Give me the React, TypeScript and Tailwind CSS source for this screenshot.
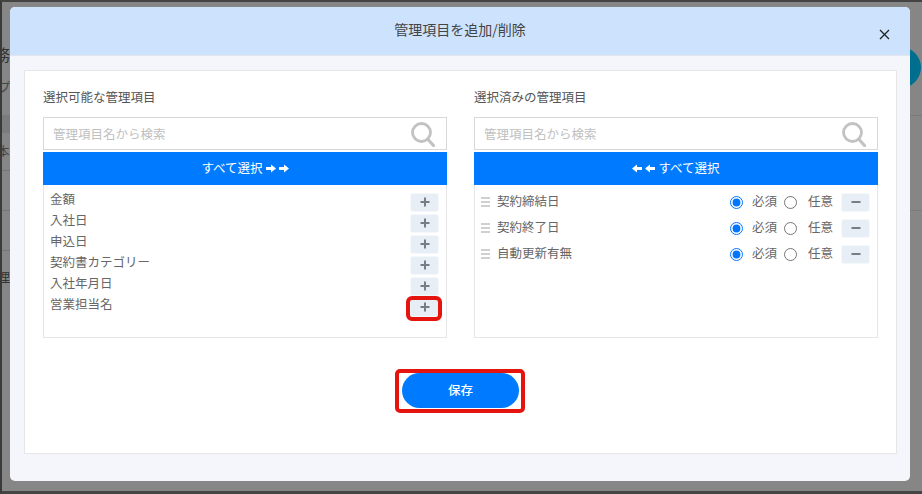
import { ReactNode } from 'react';

const FONT = "font-['Noto_Sans_CJK_JP','Noto_Sans',sans-serif]";

const available = ['金額', '入社日', '申込日', '契約書カテゴリー', '入社年月日', '営業担当名'];
const selected = ['契約締結日', '契約終了日', '自動更新有無'];

const SearchIcon = () => (
  <svg width="24" height="25" viewBox="0 0 24 25" fill="none" stroke="#c2c2c2" className="absolute right-[11px] top-[4px]">
    <circle cx="10.5" cy="10.5" r="9" strokeWidth="2.8" />
    <path d="M17 17.5 L22.5 23.5" strokeWidth="3.2" strokeLinecap="round" />
  </svg>
);

const Arrow = ({ left }: { left?: boolean }) => (
  <svg width="10" height="9" viewBox="0 0 10 9" fill="white" className={left ? 'rotate-180' : ''}>
    <path d="M0 3h5V0.5L10 4.5 5 8.5V6H0z" />
  </svg>
);

const SearchBox = () => (
  <div className="relative h-[33px] border border-[#d8d8d8] bg-white pl-[9px] pt-[1px] flex items-center">
    <span className="text-[12.5px] text-[#c0c0c0]">管理項目名から検索</span>
    <SearchIcon />
  </div>
);

const Column = ({ label, action, children }: { label: string; action: ReactNode; children: ReactNode }) => (
  <div className="w-[404px] flex flex-col">
    <div className="h-[46px] pt-[16px] text-[12.5px] leading-[20px] text-[#555]">{label}</div>
    <SearchBox />
    <div className="mt-[2px] h-[33px] bg-[#007bff] text-white text-[12.5px] flex items-center justify-center gap-[3px]">
      {action}
    </div>
    <div className="h-[153px] border border-t-0 border-[#e6e6e6] bg-white">{children}</div>
  </div>
);

const SquareButton = ({ minus }: { minus?: boolean }) => (
  <button className="w-[27px] h-[17px] rounded-[2px] bg-[#e8eef6] shadow-[0_0_0_1px_#f5f8fb] flex items-center justify-center">
    <svg width="10" height="10" viewBox="0 0 10 10" fill="#777c85">
      <rect x="0.5" y="4" width="9" height="2" />
      {!minus && <rect x="4" y="0.5" width="2" height="9" />}
    </svg>
  </button>
);

const Handle = () => (
  <div className="w-[9px] flex flex-col gap-[2px] mr-[7px]">
    <div className="h-[2px] bg-[#d0d0d0]" />
    <div className="h-[2px] bg-[#d0d0d0]" />
    <div className="h-[2px] bg-[#d0d0d0]" />
  </div>
);

export default function App() {
  return (
    <div className={`relative w-[922px] h-[494px] overflow-hidden bg-[#868686] ${FONT}`}>
      {/* page behind the overlay */}
      <div className="absolute left-[2px] top-[115px] w-[8px] h-[18px] bg-[#7c7c7c]" />
      <div className="absolute left-[2px] top-[170px] w-[8px] h-[1px] bg-[#777]" />
      <div className="absolute left-[2px] top-[210px] w-[8px] h-[1px] bg-[#777]" />
      <div className="absolute left-[2px] top-[250px] w-[8px] h-[1px] bg-[#777]" />
      <div className="absolute left-[910px] top-[115px] w-[12px] h-[1px] bg-[#7a7a7a]" />
      <div className="absolute left-[910px] top-[210px] w-[12px] h-[1px] bg-[#7a7a7a]" />
      <div className="absolute left-[-6px] top-[43px] text-[16px] leading-[22px] text-[#333]">務</div>
      <div className="absolute left-[-2px] top-[78px] text-[12.5px] leading-[18px] text-[#444]">プ</div>
      <div className="absolute left-[-3px] top-[142px] text-[12.5px] leading-[18px] text-[#444]">本</div>
      <div className="absolute left-[-3px] top-[268px] text-[13px] leading-[18px] text-[#333]">理</div>
      <div className="absolute left-[880px] top-[47px] w-[41px] h-[41px] rounded-full bg-[#006e8f]" />
      <div className="absolute inset-0 border-2 border-b-[3px] border-r-0 border-[#444] border-l-[#3a3a3a]" />

      {/* modal */}
      <div className="absolute left-[10px] top-[7px] w-[900px] h-[474px] rounded-[5px] overflow-hidden bg-[#f5f6fb] flex flex-col">
        <div className="relative h-[49px] shrink-0 bg-[#cce2fd] border-b border-[#e2e6ec] flex items-center justify-center pb-[4px]">
          <span className="text-[14px] text-[#444]">管理項目を追加/削除</span>
          <span className="absolute left-[869px] top-[22px]">
            <svg width="11" height="11" viewBox="0 0 11 11" stroke="#222" strokeWidth="1.3">
              <path d="M1 1l9 9M10 1l-9 9" />
            </svg>
          </span>
        </div>
        <div className="ml-[14px] mr-[13px] mt-[14px] h-[384px] border border-[#e6e6e6] bg-white px-[18px] flex flex-col">
          <div className="flex gap-[27px]">
            <Column
              label="選択可能な管理項目"
              action={
                <>
                  <span>すべて選択</span>
                  <Arrow />
                  <Arrow />
                </>
              }
            >
              <div className="pt-[5px] pl-[6px] pr-[8px] flex flex-col">
                {available.map((name) => (
                  <div key={name} className="h-[21px] flex items-center justify-between">
                    <span className="text-[12.5px] text-[#666] -mt-[2px]">{name}</span>
                    <span className="mt-[3px]">
                      <SquareButton />
                    </span>
                  </div>
                ))}
              </div>
            </Column>
            <Column
              label="選択済みの管理項目"
              action={
                <>
                  <Arrow left />
                  <Arrow left />
                  <span>すべて選択</span>
                </>
              }
            >
              <div className="pt-[4px] pl-[6px] pr-[8px] flex flex-col">
                {selected.map((name, i) => (
                  <div key={name} className="h-[26px] flex items-center">
                    <Handle />
                    <span className="text-[12.5px] text-[#666] -mt-[2px]">{name}</span>
                    <div className="ml-auto flex items-center text-[12.5px] text-[#666]">
                      <input type="radio" name={`r${i}`} defaultChecked className="w-[13px] h-[13px] m-0 accent-[#0075ff]" />
                      <span className="ml-[9px] -mt-[2px]">必須</span>
                      <input type="radio" name={`r${i}`} className="w-[13px] h-[13px] m-0 ml-[7px]" />
                      <span className="ml-[11px] -mt-[2px]">任意</span>
                      <span className="ml-[9px]">
                        <SquareButton minus />
                      </span>
                    </div>
                  </div>
                ))}
              </div>
            </Column>
          </div>
          <div className="flex justify-center mt-[35px]">
            <button className="w-[117px] h-[35px] rounded-full bg-[#007bff] text-white text-[12.5px] font-medium pb-[1px]">
              保存
            </button>
          </div>
        </div>
      </div>

      {/* red callouts */}
      <div className="absolute left-[406px] top-[296px] w-[36px] h-[25px] rounded-[6px] border-[4px] border-[#e6140f]" />
      <div className="absolute left-[395px] top-[369px] w-[130px] h-[44px] rounded-[5px] border-[4px] border-[#e6140f]" />
    </div>
  );
}
